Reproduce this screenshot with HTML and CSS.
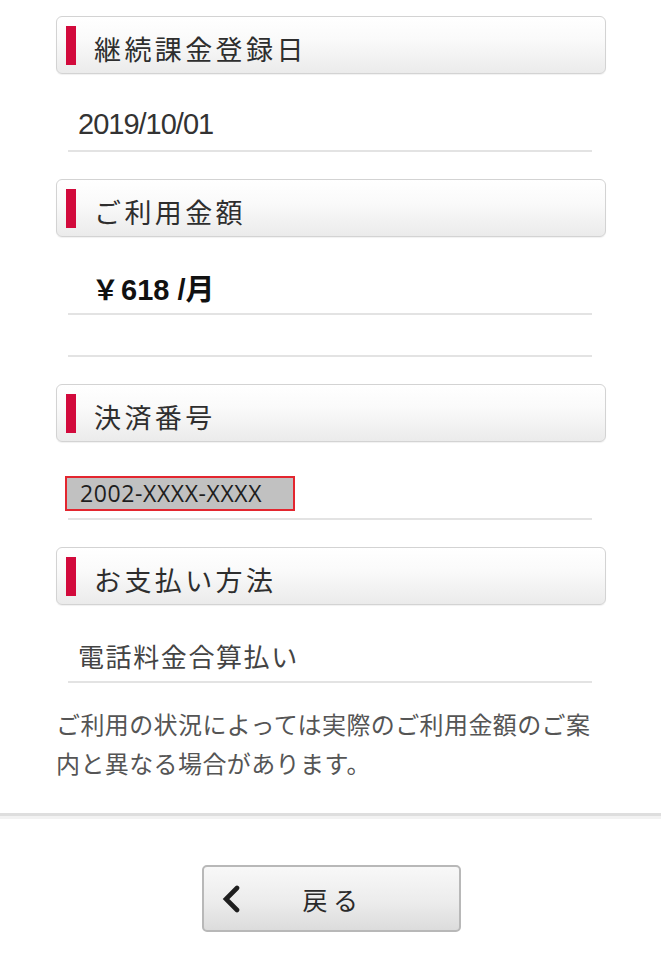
FILE: index.html
```html
<!DOCTYPE html>
<html lang="ja">
<head>
<meta charset="utf-8">
<title>継続課金</title>
<link rel="stylesheet" href="styles.css">
</head>
<body>
<main class="content">
  <section class="block">
    <h2 class="head"><span class="mark"></span><span class="head-text">継続課金登録日</span></h2>
    <div class="value"><span class="date">2019/10/01</span></div>
  </section>
  <section class="block">
    <h2 class="head"><span class="mark"></span><span class="head-text">ご利用金額</span></h2>
    <div class="value"><span class="amount"><span class="yen">￥</span>618 /月</span></div>
    <div class="value empty"></div>
  </section>
  <section class="block">
    <h2 class="head"><span class="mark"></span><span class="head-text">決済番号</span></h2>
    <div class="value number-row"><span class="number">2002-XXXX-XXXX</span></div>
  </section>
  <section class="block">
    <h2 class="head"><span class="mark"></span><span class="head-text">お支払い方法</span></h2>
    <div class="value"><span class="method">電話料金合算払い</span></div>
  </section>
  <p class="note">ご利用の状況によっては実際のご利用金額のご案内と異なる場合があります。</p>
</main>
<hr class="sep">
<div class="actions">
  <button class="back" type="button">
    <svg class="chev" width="18" height="28" viewBox="0 0 18 28"><polyline points="15,3 4,14 15,25" fill="none" stroke="#1e1e1e" stroke-width="4.6" stroke-linecap="round" stroke-linejoin="miter"/></svg>
    <span class="back-text">戻 る</span>
  </button>
</div>
</body>
</html>
```

FILE: styles.css
```css
html, body {
  margin: 0;
  padding: 0;
  background: #fff;
}
body {
  font-family: "Noto Sans CJK JP", "Noto Sans", sans-serif;
  color: #333;
}
.content {
  padding: 16px 55px 0 56px;
}
.block {
  margin-bottom: 27px;
}
.block:last-of-type {
  margin-bottom: 0;
}
.head {
  margin: 0;
  height: 58px;
  box-sizing: border-box;
  border: 1px solid #d3d3d3;
  border-radius: 6px;
  background: linear-gradient(#ffffff, #fafafa 40%, #ebebeb);
  box-shadow: 0 1px 1px rgba(0, 0, 0, 0.06);
  display: flex;
  align-items: center;
  padding-left: 9px;
  font-weight: normal;
}
.mark {
  width: 10px;
  height: 39px;
  background: #d20a3c;
  flex: none;
  margin-top: 1px;
}
.head-text {
  margin-left: 18px;
  font-size: 27px;
  letter-spacing: 3.4px;
  color: #2e2e2e;
  padding-top: 6px;
  line-height: 39px;
}
.value {
  margin: 0 14px 0 12px;
  height: 52px;
  padding-top: 24px;
  border-bottom: 2px solid #e3e3e3;
  display: flex;
  align-items: center;
  padding-left: 10px;
}
.value.empty {
  height: 40px;
  padding-top: 0;
}
.date {
  font-family: "Liberation Sans", sans-serif;
  font-size: 29px;
  letter-spacing: -1px;
  color: #333;
}
.amount {
  font-family: "Liberation Sans", "Noto Sans CJK JP", sans-serif;
  font-weight: bold;
  font-size: 29px;
  color: #111;
  padding-left: 14px;
}
.yen {
  font-family: "Noto Sans CJK JP", sans-serif;
  font-weight: bold;
  font-size: 27px;
  margin-right: 2px;
}
.number-row {
  padding-left: 0;
}
.number {
  display: block;
  margin-left: -3px;
  margin-top: 2px;
  width: 230px;
  height: 35px;
  box-sizing: border-box;
  border: 2px solid #e3262f;
  background: #c1c1c1;
  font-family: "Open Sans", sans-serif;
  font-size: 23px;
  letter-spacing: 0.6px;
  color: #1e1e1e;
  padding-left: 13px;
  line-height: 31px;
}
.method {
  font-size: 26px;
  letter-spacing: 1.6px;
  color: #444;
}
.note {
  margin: 21px 0 0;
  font-size: 24px;
  letter-spacing: 0.4px;
  line-height: 39px;
  color: #555;
}
.sep {
  margin: 31px 0 0;
  height: 0;
  border: 0;
  border-top: 3px solid #dedede;
  border-bottom: 3px solid #f2f2f2;
}
.actions {
  display: flex;
  justify-content: center;
  padding-top: 46px;
  padding-left: 1px;
}
.back {
  width: 259px;
  height: 67px;
  box-sizing: border-box;
  border: 2px solid #b8b8b8;
  border-radius: 5px;
  background: linear-gradient(#f8f8f8, #ececec 55%, #dcdcdc);
  display: flex;
  align-items: center;
  padding: 0 0 0 18px;
  font-family: "Noto Sans CJK JP", sans-serif;
  cursor: pointer;
}
.chev {
  flex: none;
}
.back-text {
  margin-left: 63px;
  font-size: 25px;
  color: #2a2a2a;
}
```
